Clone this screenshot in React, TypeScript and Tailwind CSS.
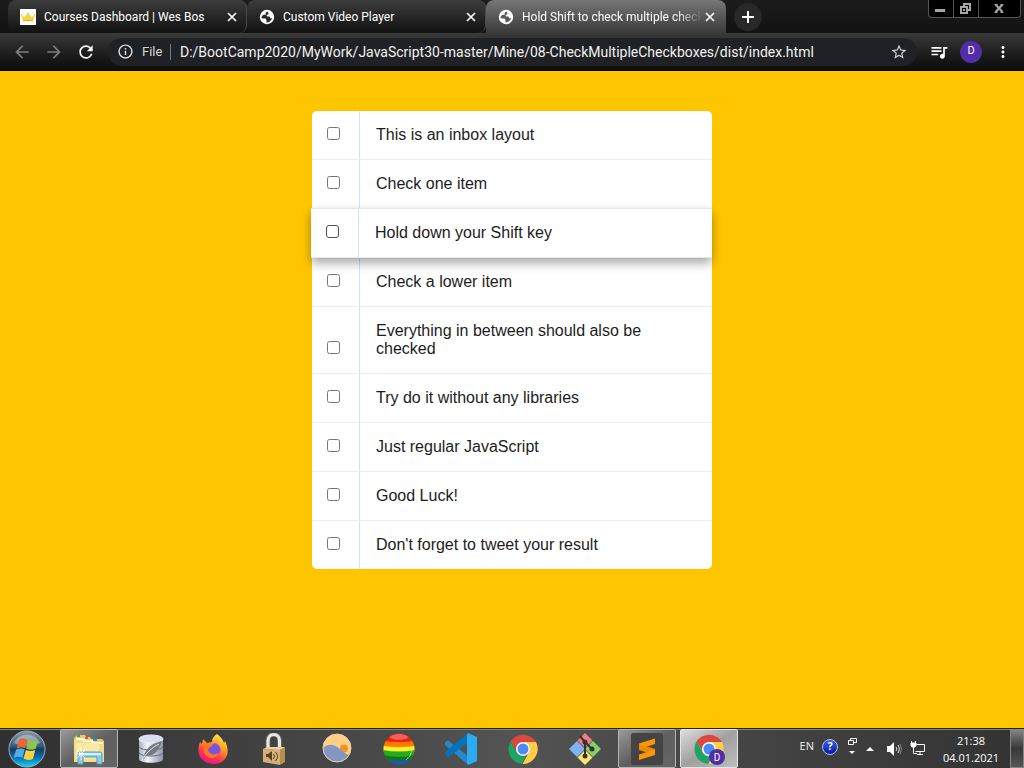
import type { ReactNode } from "react";
import {
  MdArrowBack,
  MdArrowForward,
  MdInfoOutline,
  MdMoreVert,
  MdQueueMusic,
  MdRefresh,
  MdStarBorder,
} from "react-icons/md";

const items = [
  "This is an inbox layout",
  "Check one item",
  "Hold down your Shift key",
  "Check a lower item",
  "Everything in between should also be checked",
  "Try do it without any libraries",
  "Just regular JavaScript",
  "Good Luck!",
  "Don't forget to tweet your result",
];

function Crown() {
  return (
    <svg viewBox="0 0 16 16" className="size-4">
      <rect width="16" height="16" fill="#fff" />
      <path d="M1 6l3.200 2L8 4.500 11.800 8 15 6l-1.600 5H2.600z" fill="#f3d54a" />
      <path d="M3 11h10v1.200H3z" fill="#dfb52a" />
      <circle cx="8" cy="4.500" r="1" fill="#e8c43c" />
      <circle cx="1.300" cy="6" r=".8" fill="#e8c43c" />
      <circle cx="14.700" cy="6" r=".8" fill="#e8c43c" />
    </svg>
  );
}

function Globe({ land }: { land: string }) {
  return (
    <svg viewBox="0 0 16 16" className="size-4">
      <circle cx="8" cy="8" r="7.200" fill="#fff" />
      <path
        d="M9 2.500 6.500 3.800 7 5.500l-3 .5L2.500 8c0 1 .8 1.500 2 1.500h2l1 1.500v2.500c2.500 0 5-1.800 5.700-4.500l-1.700.5-1-2H8L7.500 6l2-.8z"
        fill={land}
      />
    </svg>
  );
}

function Tab({ title, icon, active = false }: { title: string; icon: ReactNode; active?: boolean }) {
  return (
    <div
      className={
        active
          ? "flex h-full w-60 min-w-0 items-center rounded-t-lg bg-linear-to-b from-[#777777] to-[#3b3b3b] pr-2 pl-3"
          : "flex h-full w-[239px] min-w-0 items-center rounded-lg border-r border-[#4a4a4a] bg-linear-to-b from-[#3d3d3d] to-[#121212] pr-1.5 pl-3"
      }
    >
      <span className="flex size-4 shrink-0 items-center justify-center text-white">{icon}</span>
      <a
        href="#"
        className={
          active
            ? "ml-2 min-w-0 flex-1 overflow-hidden mask-r-from-85% mask-r-to-100% whitespace-nowrap text-white"
            : "ml-2 min-w-0 flex-1 overflow-hidden whitespace-nowrap text-white"
        }
      >
        {title}
      </a>
      <button aria-label="Close tab" className="flex size-4 shrink-0 items-center justify-center text-white">
        <svg viewBox="0 0 16 16" className="size-4">
          <path d="m4 4 8 8m0-8-8 8" stroke="currentColor" strokeWidth="1.700" />
        </svg>
      </button>
    </div>
  );
}

function WindowControls() {
  return (
    <div className="mr-[3px] ml-auto flex h-[18px] shrink-0 self-start rounded-b border border-t-0 border-[#555] bg-black text-[#a5a5a5]">
      <button aria-label="Minimize" className="flex w-[25px] items-center justify-center border-r border-[#555] pr-0.5">
        <svg viewBox="0 0 12 12" className="size-3">
          <path d="M1 6h10v3H1z" fill="currentColor" />
        </svg>
      </button>
      <button aria-label="Restore" className="flex w-[25px] items-center justify-center border-r border-[#555] pr-0.5">
        <svg viewBox="0 0 12 12" className="size-3">
          <path d="M4 0h8v8H9V6h1V2H6v1H4z" fill="currentColor" />
          <path fillRule="evenodd" d="M1 3h8v8H1zM3 5v4h4V5z" fill="currentColor" />
          <path d="M4 6h2v2H4z" fill="currentColor" />
        </svg>
      </button>
      <button aria-label="Close" className="flex w-[41px] items-center justify-center pr-0.5">
        <svg viewBox="0 0 12 12" className="size-3">
          <path d="m2.500 1.500 7 7.500m0-7.500-7 7.500" stroke="currentColor" strokeWidth="2.200" />
          <path d="M1.500 1.500h3M7.500 1.500h3M1.500 9.500h3M7.500 9.500h3" stroke="currentColor" />
        </svg>
      </button>
    </div>
  );
}

function BrowserHeader() {
  return (
    <header className="font-[Roboto,'Open_Sans',sans-serif]">
      <div className="flex h-[33px] items-center bg-linear-to-b from-[#1c1c1c] to-[#121212] pl-2 text-[12px]">
        <Tab title="Courses Dashboard | Wes Bos" icon={<Crown />} />
        <Tab title="Custom Video Player" icon={<Globe land="#262626" />} />
        <Tab title="Hold Shift to check multiple checkboxes" icon={<Globe land="#595959" />} active />
        <button
          aria-label="New tab"
          className="ml-2 flex size-7 shrink-0 items-center justify-center rounded-full bg-[#282828] text-white"
        >
          <svg viewBox="0 0 16 16" className="size-4">
            <path d="M8 2v12M2 8h12" stroke="currentColor" strokeWidth="2" />
          </svg>
        </button>
        <WindowControls />
      </div>
      <div className="flex h-[38px] items-center border-b border-black bg-linear-to-b from-[#3a3a3a] via-[#171717] via-70% to-[#0d0d0d] pr-3 pl-3 text-white">
        <button aria-label="Back" className="text-[#7c7c7c]">
          <MdArrowBack className="size-5" />
        </button>
        <button aria-label="Forward" className="ml-3 text-[#7c7c7c]">
          <MdArrowForward className="size-5" />
        </button>
        <button aria-label="Reload" className="ml-3">
          <MdRefresh className="size-5" />
        </button>
        <div className="ml-3 flex h-7 min-w-0 flex-1 items-center rounded-full bg-[#202124] pr-[9px] pl-[9px]">
          <MdInfoOutline className="size-[17px] shrink-0 text-[#e0e0e0]" />
          <span className="ml-2 w-6 shrink-0 text-[13px] text-[#d5d7da]">File</span>
          <span className="ml-1 h-4 w-px shrink-0 bg-[#75777a]" />
          <input
            aria-label="Address"
            className="ml-[9px] min-w-0 flex-1 bg-transparent pt-0.5 text-[14px] text-[#f1f1f1] outline-none"
            defaultValue="D:/BootCamp2020/MyWork/JavaScript30-master/Mine/08-CheckMultipleCheckboxes/dist/index.html"
          />
          <button aria-label="Bookmark" className="ml-2 shrink-0 text-[#cfcfcf]">
            <MdStarBorder className="size-[18px]" />
          </button>
        </div>
        <button aria-label="Media controls" className="ml-3">
          <MdQueueMusic className="size-5" />
        </button>
        <button
          aria-label="Profile"
          className="ml-[11px] flex size-[22px] items-center justify-center rounded-full bg-[#512da8] text-[11px]"
        >
          D
        </button>
        <button aria-label="Menu" className="ml-3">
          <MdMoreVert className="size-[18px]" />
        </button>
      </div>
    </header>
  );
}

function Inbox() {
  return (
    <ul className="mx-auto w-full max-w-[400px] rounded-[5px] bg-white font-['Liberation_Sans',Arial,sans-serif] text-[16px] leading-[18px] text-[#1c1c1c]">
      {items.map((text, i) => {
        const hovered = i === 2;
        return (
          <li
            key={text}
            className={
              hovered
                ? "relative -mt-px -ml-px flex items-end border-y border-[#e6e6e6] bg-white shadow-[0_5px_10px_rgba(0,0,0,0.35)]"
                : "flex items-end border-b border-[#ededed] last:border-b-0"
            }
          >
            <input
              id={`item-${i}`}
              type="checkbox"
              className={
                hovered
                  ? "mr-[19px] mb-[19px] ml-[15px] size-[13px] shrink-0 appearance-none rounded-[3px] border border-[#4f4f4f] bg-white checked:bg-[#0075ff]"
                  : "mr-[19px] mb-[19px] ml-[15px] size-[13px] shrink-0"
              }
            />
            <label htmlFor={`item-${i}`} className="flex-1 border-l border-[#d1e2ff] px-4 py-[15px]">
              {text}
            </label>
          </li>
        );
      })}
    </ul>
  );
}

function StartOrb() {
  return (
    <svg viewBox="0 0 38 38" className="size-[38px]">
      <defs>
        <linearGradient id="orb" x1="0" y1="0" x2="0" y2="1">
          <stop offset="0" stopColor="#8b9ba8" />
          <stop offset=".42" stopColor="#365b7b" />
          <stop offset=".5" stopColor="#123d63" />
          <stop offset=".75" stopColor="#0873b4" />
          <stop offset="1" stopColor="#19d4fa" />
        </linearGradient>
      </defs>
      <circle cx="19" cy="19" r="18" fill="url(#orb)" stroke="#9fb0bb" />
      <path d="M6 13C11 2 27 2 32 13c-7 3-18 4-26 0z" fill="#fff" opacity=".35" />
      <path d="M11 9.500c3-1.500 5-1.300 8.500.2l-2.300 8.500c-3-1.500-5-1.300-8.500 0z" fill="#ef6430" />
      <path d="M20.500 10.200c3 1.500 5.500 1.300 10-.5l-2.800 9c-3.500 1.500-6.500 1.300-9.500-.2z" fill="#8fc546" />
      <path d="M8.200 19.500c3-1.400 5.500-1.300 8.500 0l-2.300 8.300c-3-1.400-5.500-1.300-8.900.2z" fill="#52aee8" />
      <path d="M18 20c3 1.400 5.500 1.500 9.300.1L24.800 29c-3.500 1.500-6.200 1.200-9.300-.4z" fill="#ffd13b" />
    </svg>
  );
}

function Explorer() {
  return (
    <svg viewBox="0 0 34 32" className="h-8 w-[34px]">
      <path d="M3 4l2-2h8l1 2h4l1 2h11l2 2v19H2V5z" fill="#e9cb72" />
      <path d="M4 5h10v2h8v2h9v18H3z" fill="#fff8d8" />
      <path d="M5 2h3v2H5z" fill="#28b33a" />
      <path d="M13 4h3v2h-3z" fill="#e65332" />
      <path d="M21 6h4v2h-4z" fill="#258bd9" />
      <path d="M2 7h8l2 2h7l2 2h11v18H2z" fill="#f3dc85" />
      <path d="M4 10h23v16H4z" fill="#f8e9a7" />
      <path d="M6 31V21q0-2 2-2h20q2 0 2 2v10h-5v-7H11v7z" fill="#8fcdea" stroke="#4b9fc8" />
      <path d="M7 20h22v2H7z" fill="#d2f3ff" />
      <path d="M9 14v13M3 21h12M5 17l8 8m0-8-8 8" stroke="#fff" strokeWidth=".8" />
    </svg>
  );
}

function Database() {
  return (
    <svg viewBox="0 0 32 32" className="size-8">
      <defs>
        <linearGradient id="db">
          <stop stopColor="#a7aebd" />
          <stop offset=".35" stopColor="#f3f5fa" />
          <stop offset="1" stopColor="#8d94a6" />
        </linearGradient>
      </defs>
      <path d="M4 6v20c0 5 24 5 24 0V6z" fill="url(#db)" />
      <ellipse cx="16" cy="6" rx="12" ry="4" fill="#d9ddec" stroke="#edf0f8" />
      <path d="M4 14c2 4 22 4 24 0M4 20c2 4 22 4 24 0" fill="none" stroke="#687080" />
      <path d="M27 8C16 10 9 17 8 27l3-4c7 0 12-3 16-15z" fill="#737985" />
      <path d="M7 28c3-7 9-13 17-17" fill="none" stroke="#e4e7ee" />
    </svg>
  );
}

function Firefox() {
  return (
    <svg viewBox="0 0 32 32" className="size-8">
      <defs>
        <linearGradient id="fox" x1=".8" y1="0" x2=".3" y2="1">
          <stop stopColor="#fff149" />
          <stop offset=".4" stopColor="#ff9a20" />
          <stop offset=".72" stopColor="#ff3750" />
          <stop offset="1" stopColor="#e31587" />
        </linearGradient>
      </defs>
      <path
        d="M20 1c4 3 6 6 7 9l1-2c7 14-1 23-11 23C5 31-2 21 3 9l2 2 1-5 4 4 5-1c0-4 2-6 5-8z"
        fill="url(#fox)"
      />
      <circle cx="17" cy="17" r="6.500" fill="#7854df" />
      <path d="M6 11c5-2 6 0 10 0-1 3-4 3-5 6 2 5 8 6 11 2-1 7-12 9-15 0z" fill="#ff7522" />
      <path d="M17 10c3 0 5 2 6 4-3-2-5-1-6-4z" fill="#b44be0" />
    </svg>
  );
}

function VolumeLock() {
  return (
    <svg viewBox="0 0 32 32" className="size-8">
      <path d="M9 16V7.500c0-8 11.500-8 11.500 0V15" fill="none" stroke="#777" strokeWidth="4.500" />
      <path d="M9 16V7.500c0-8 11.500-8 11.500 0V15" fill="none" stroke="#e8e8e8" strokeWidth="3" />
      <path d="m4 16 17 1v15L4 29z" fill="#d4b078" />
      <path d="m21 17 5-3v15l-5 3z" fill="#b98c4f" />
      <path d="m4 16 5-2 17 0-5 3z" fill="#ecd19e" />
      <path d="M7 21h2l4-3v10l-4-4H7z" fill="#5b4324" />
      <path d="M14.500 21q2 2 0 5m2-7q4 4 0 9" fill="none" stroke="#5b4324" />
    </svg>
  );
}

function Flux() {
  return (
    <svg viewBox="0 0 32 32" className="size-8">
      <clipPath id="sky">
        <circle cx="16" cy="15" r="14" />
      </clipPath>
      <g clipPath="url(#sky)">
        <path fill="#ffd083" d="M0 0h32v32H0z" />
        <circle cx="23" cy="15.500" r="4" fill="#f09427" />
        <path d="M1 16C8 9 14 12 19 16s6 6 12 6v10H1z" fill="#8496c2" />
      </g>
      <circle cx="16" cy="15" r="14" fill="none" stroke="#e6d0ac" />
    </svg>
  );
}

function RainbowBall() {
  return (
    <svg viewBox="0 0 32 32" className="size-8">
      <clipPath id="ball">
        <circle cx="16" cy="16" r="15.500" />
      </clipPath>
      <g clipPath="url(#ball)">
        <path fill="#ed1e12" d="M0 0h32v10H0z" />
        <path fill="#ff7800" d="M0 8q16 2 32 0v7H0z" />
        <path fill="#fff12b" d="M0 13q16 2 32 0v6H0z" />
        <path fill="#25a91d" d="M0 17q16 3 32 0v12H0z" />
        <path fill="#127714" d="M0 22q16 4 32 0v7H0z" />
        <path fill="#1659b7" d="M0 25q16 5 32 0v8H0z" />
        <ellipse cx="16" cy="4" rx="9" ry="3" fill="#fff" opacity=".3" />
        <path d="M29 17q-1 7-6 10" fill="none" stroke="#fff" opacity=".5" />
      </g>
    </svg>
  );
}

function Code() {
  return (
    <svg viewBox="0 0 32 32" className="size-8">
      <path d="M3 7.500 0 9.500v2.500l23 20 2-2-2-7z" fill="#2489ca" />
      <path d="m0 21 3 3.500L25 8V2l-2-2L0 19z" fill="#0872b9" />
      <path d="m23 0 9 4v24l-9 4-1-2V2z" fill="#2caaf2" />
    </svg>
  );
}

function Chrome({ badge = false }: { badge?: boolean }) {
  return (
    <svg viewBox="0 0 32 32" className="size-8">
      <path d="M3.500 8.500A15 15 0 0 1 29 9H16L9.500 18z" fill="#d94a3d" />
      <path d="M29 9a15 15 0 0 1-13.500 22L22 19c2-4 0-8-5-10z" fill="#ffcd46" />
      <path d="M3.500 8.500 10 20c2 3 5 4 9 3l-4 8A15 15 0 0 1 3.500 8.500z" fill="#20a463" />
      <circle cx="16" cy="16" r="7" fill="#fff" />
      <circle cx="16" cy="16" r="5.500" fill="#4b8bf4" />
      {badge && (
        <>
          <circle cx="24" cy="24" r="8" fill="#512da8" />
          <text x="24" y="27.500" textAnchor="middle" fontFamily="Roboto" fontSize="10" fill="#fff">
            D
          </text>
        </>
      )}
    </svg>
  );
}

function Git() {
  return (
    <svg viewBox="0 0 32 32" className="size-8">
      <path d="m16 0 7.500 7.500L16 15 8.500 7.500z" fill="#f37c7c" />
      <path d="m8 8 8 8-8 8-8-8z" fill="#80b3f4" />
      <path d="m24 8 8 8-8 8-8-8z" fill="#83cf6c" />
      <path d="m16 17 7.500 7.500L16 32l-7.500-7.500z" fill="#ffe46b" />
      <path d="m11 3 5 6v14m0-14 7 7" fill="none" stroke="#333" strokeWidth="2" />
      <circle cx="16" cy="9" r="2.500" fill="#333" />
      <circle cx="23" cy="16" r="2.500" fill="#333" />
      <circle cx="16" cy="23" r="2.500" fill="#333" />
    </svg>
  );
}

function Sublime() {
  return (
    <svg viewBox="0 0 32 32" className="size-8">
      <rect width="32" height="32" rx="2" fill="#444" />
      <path d="M8 10.500 24 5.500v5.500L8 16z" fill="#ff9800" />
      <path d="m8 11 16 5v6L8 17z" fill="#f08900" />
      <path d="m8 21.500 16-5V22L8 27z" fill="#ff9800" />
    </svg>
  );
}

const apps: { name: string; icon: ReactNode; state: "idle" | "open" | "active" }[] = [
  { name: "Explorer", icon: <Explorer />, state: "open" },
  { name: "Database", icon: <Database />, state: "idle" },
  { name: "Firefox", icon: <Firefox />, state: "idle" },
  { name: "Volume lock", icon: <VolumeLock />, state: "idle" },
  { name: "Flux", icon: <Flux />, state: "idle" },
  { name: "Rainbow", icon: <RainbowBall />, state: "idle" },
  { name: "Code editor", icon: <Code />, state: "idle" },
  { name: "Chrome", icon: <Chrome />, state: "idle" },
  { name: "Git", icon: <Git />, state: "idle" },
  { name: "Sublime Text", icon: <Sublime />, state: "open" },
  { name: "Chrome window", icon: <Chrome badge />, state: "active" },
];

const appStyles = {
  idle: "flex h-full w-[58px] items-center justify-center",
  open: "flex h-full w-[58px] items-center justify-center rounded-[2px] border border-[#b5b5b5] bg-linear-to-br from-[#999] via-[#606060] to-[#656565]",
  active:
    "flex h-full w-[58px] items-center justify-center rounded-[2px] border border-[#e5e5e5] bg-linear-to-br from-[#dedede] via-[#a0a0a0] to-[#bebebe]",
};

function Tray() {
  return (
    <div className="ml-auto flex h-full shrink-0 items-center text-white">
      <span className="mb-1 text-[#f0f0f0]">EN</span>
      <button
        aria-label="Help"
        className="mb-1 ml-2 flex size-4 items-center justify-center rounded-full border border-[#b7c4e8] bg-linear-to-b from-[#3b5de0] to-[#0714a8] font-bold"
      >
        ?
      </button>
      <button aria-label="Language options" className="mb-1 ml-2">
        <svg viewBox="0 0 12 18" className="h-[18px] w-3">
          <path d="M4.500 3V.5h6v4H8" fill="none" stroke="#fff" />
          <path d="M2.500 2.500h5v4h-5z" fill="none" stroke="#fff" />
          <path d="M3 13h6l-3 3z" fill="#fff" />
        </svg>
      </button>
      <button aria-label="Show hidden icons" className="ml-2">
        <svg viewBox="0 0 8 5" className="h-[5px] w-2">
          <path d="m0 5 4-4 4 4z" fill="#fff" />
        </svg>
      </button>
      <button aria-label="Volume" className="ml-3">
        <svg viewBox="0 0 16 16" className="size-4">
          <path d="M1 5h3l4-4v14l-4-4H1z" fill="#fff" />
          <path d="M10 6q1.500 2 0 4m2-6q3 4 0 8" fill="none" stroke="#ddd" />
          <path d="M14 3q3 5 0 10" fill="none" stroke="#888" />
        </svg>
      </button>
      <button aria-label="Network" className="ml-2">
        <svg viewBox="0 0 16 16" className="size-4">
          <path d="M6.500 3.500h8v7h-9" fill="none" stroke="#fff" />
          <path d="M1 2h5v3L5 6H2L1 5zM1.500 0v2m4-2v2" fill="#fff" stroke="#fff" />
          <path d="M3.500 6v6.500H7M10 11v2M7 13.500h6" fill="none" stroke="#fff" />
        </svg>
      </button>
      <div className="ml-3 w-[66px] text-center leading-[17px]">
        <div>21:38</div>
        <div>04.01.2021</div>
      </div>
      <button
        aria-label="Show desktop"
        className="ml-1.5 h-full w-[14px] border border-[#858585] bg-linear-to-b from-[#858585] via-[#383838] to-[#565656]"
      />
    </div>
  );
}

function Taskbar() {
  return (
    <footer className="flex h-10 shrink-0 items-center border-t border-[#292510] bg-linear-to-r from-[#303030] via-[#535353] to-[#333] pl-2 font-['Open_Sans','Noto_Sans',sans-serif] text-[11px] inset-shadow-[0_1px_0_#858577]">
      <button aria-label="Start" className="mr-[14px] shrink-0">
        <StartOrb />
      </button>
      <nav aria-label="Applications" className="flex h-full gap-1">
        {apps.map((app) => (
          <button key={app.name} aria-label={app.name} className={appStyles[app.state]}>
            {app.icon}
          </button>
        ))}
      </nav>
      <Tray />
    </footer>
  );
}

export default function App() {
  return (
    <div className="flex min-h-screen flex-col bg-[#ffc600]">
      <BrowserHeader />
      <main className="flex-1 py-10">
        <Inbox />
      </main>
      <Taskbar />
    </div>
  );
}
